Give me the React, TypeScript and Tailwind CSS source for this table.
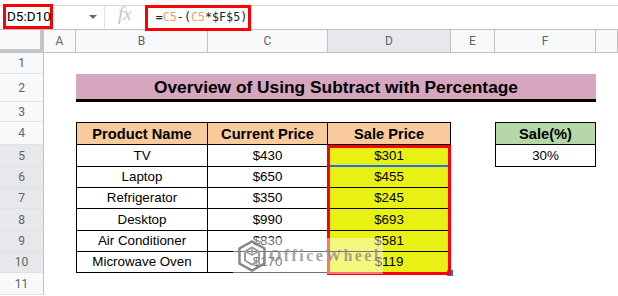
import React from 'react';

// Spreadsheet screenshot: subtract with percentage example
const ROW_BG_SELECTED = 'bg-[#e6e8eb]';
const ROW_BG = 'bg-[#f8f9fa]';

const products = [
  { name: 'TV', current: '$430', sale: '$301' },
  { name: 'Laptop', current: '$650', sale: '$455' },
  { name: 'Refrigerator', current: '$350', sale: '$245' },
  { name: 'Desktop', current: '$990', sale: '$693' },
  { name: 'Air Conditioner', current: '$830', sale: '$581' },
  { name: 'Microwave Oven', current: '$170', sale: '$119' },
];

const colLabels = ['A', 'B', 'C', 'D', 'E', 'F', ''];

const FormulaBar: React.FC = () => (
  <div className="relative z-20 h-[29px] flex items-start">
    <div className="absolute left-0 right-0 top-[5px] h-px bg-[#dadce0]" />
    <div className="relative ml-[3px] mt-[4px] w-[50px] h-[25px] border-[3px] border-[#ff0000] bg-white flex items-center pl-px">
      <span className="text-[13.5px] text-black font-['Roboto'] leading-none">D5:D10</span>
    </div>
    <div className="relative ml-[36px] mt-[15px] w-0 h-0 border-l-[4px] border-r-[4px] border-t-[4px] border-l-transparent border-r-transparent border-t-[#666]" />
    <div className="relative ml-[7px] mt-[6px] w-px h-[22px] bg-[#e0e0e0]" />
    <div className="relative ml-[13px] mt-[4px] text-[19px] italic text-[#c4c4c4] font-['Liberation_Serif'] leading-none">fx</div>
    <div className="relative ml-[13px] mt-[5px] w-[106px] h-[26px] border-[3px] border-[#ff0000] bg-white flex items-center pl-[8px]">
      <span className="text-[11.7px] font-['DejaVu_Sans_Mono'] text-[#222] leading-none whitespace-pre">
        =<span className="text-[#f0a057]">C5</span>-(<span className="text-[#f0a057]">C5</span>*$F$5)
      </span>
    </div>
  </div>
);

const RowHead: React.FC<{ n: number }> = ({ n }) => (
  <div
    className={`${n >= 5 && n <= 10 ? ROW_BG_SELECTED : ROW_BG} border-r border-r-[#c0c0c0] border-b border-b-[#e0e0e0] flex items-center justify-center text-[12px] text-[#5f6368] font-['Roboto']`}
  >
    {n}
  </div>
);

const Logo: React.FC = () => (
  <svg width="28" height="32" viewBox="0 0 28 32" fill="none">
    <path d="M14 1.5 L26.5 8.5 V23.5 L14 30.5 L1.5 23.5 V8.5 Z" stroke="#858585" strokeWidth="2.4" />
    <path d="M14 7.5 L21 11.5 V20.5 L14 24.5 L7 20.5 V11.5 Z" stroke="#9a9a9a" strokeWidth="2" />
    <path d="M14 7.5 V15 M7 11.5 L14 15 L21 11.5" stroke="#a3a3a3" strokeWidth="1.6" />
  </svg>
);

export default function App() {
  const tb = 'border-black border-r border-b flex items-center justify-center';
  return (
    <div className="w-[618px] h-[296px] overflow-hidden bg-white font-['Liberation_Sans',Arial,sans-serif] text-black">
      <FormulaBar />
      <div className="relative grid grid-cols-[44px_32px_132px_120px_123px_44px_101px_1fr] grid-rows-[24px_21px_28px_20px_23px_22px_21px_21px_22px_21px_21px_22px]">
        {/* column headers */}
        <div className="bg-[#f8f9fa] border-t border-t-[#c0c0c0] border-r-4 border-b-4 border-[#c4c4c4]" />
        {colLabels.map((c, i) => (
          <div
            key={i}
            className={`${c === 'D' ? 'bg-[#e6e8eb]' : 'bg-[#f8f9fa]'} border-t border-r border-b border-[#c0c0c0] flex items-center justify-center text-[12px] text-[#5f6368] font-['Roboto']`}
          >
            {c}
          </div>
        ))}

        {/* row 1 */}
        <RowHead n={1} />
        <div className="col-span-7" />

        {/* row 2 */}
        <RowHead n={2} />
        <div />
        <div className="col-span-5 bg-[#d5a6bd] border-b-[3px] border-black flex items-center justify-center pt-[2px] text-[17.33px] font-bold">
          Overview of Using Subtract with Percentage
        </div>
        <div />

        {/* row 3 */}
        <RowHead n={3} />
        <div className="col-span-7" />

        {/* row 4 */}
        <RowHead n={4} />
        <div />
        <div className={`${tb} border-l border-t bg-[#f9cb9c] text-[14.67px] font-bold`}>Product Name</div>
        <div className={`${tb} border-t bg-[#f9cb9c] text-[14.67px] font-bold`}>Current Price</div>
        <div className={`${tb} border-t bg-[#f9cb9c] text-[14.67px] font-bold`}>Sale Price</div>
        <div />
        <div className={`${tb} border-l border-t bg-[#b6d7a8] text-[14.67px] font-bold`}>Sale(%)</div>
        <div />

        {/* rows 5-10 */}
        {products.map((p, i) => (
          <React.Fragment key={p.name}>
            <RowHead n={i + 5} />
            <div />
            <div className={`${tb} border-l text-[13.33px]`}>{p.name}</div>
            <div className={`${tb} text-[13.33px]`}>{p.current}</div>
            <div className={`${tb} bg-[#e9f014] text-[13.33px]`}>{p.sale}</div>
            <div />
            {i === 0 ? <div className={`${tb} border-l text-[13.33px]`}>30%</div> : <div />}
            <div />
          </React.Fragment>
        ))}

        {/* row 11 */}
        <RowHead n={11} />
        <div className="col-span-7" />

        {/* selection handle, range outline and active cell edge */}
        <div className="absolute left-[447px] top-[241px] w-[6px] h-[6px] bg-[#1a73e8]" />
        <div className="absolute left-[327px] top-[116px] w-[124px] h-[130px] border-[3px] border-[#ff0000]" />
        <div className="absolute left-[330px] top-[136px] w-[118px] h-[2px] bg-[#1a73e8]" />

        {/* watermark */}
        <div className="absolute left-[233px] top-[209px] w-[150px] h-[36px] bg-white/45 flex items-center pl-[5px] gap-[3px]">
          <Logo />
          <span className="text-[16px] font-bold tracking-[2.4px] text-[#8c8c8c]/80 font-['Liberation_Serif']">OfficeWheel</span>
        </div>
      </div>
    </div>
  );
}
